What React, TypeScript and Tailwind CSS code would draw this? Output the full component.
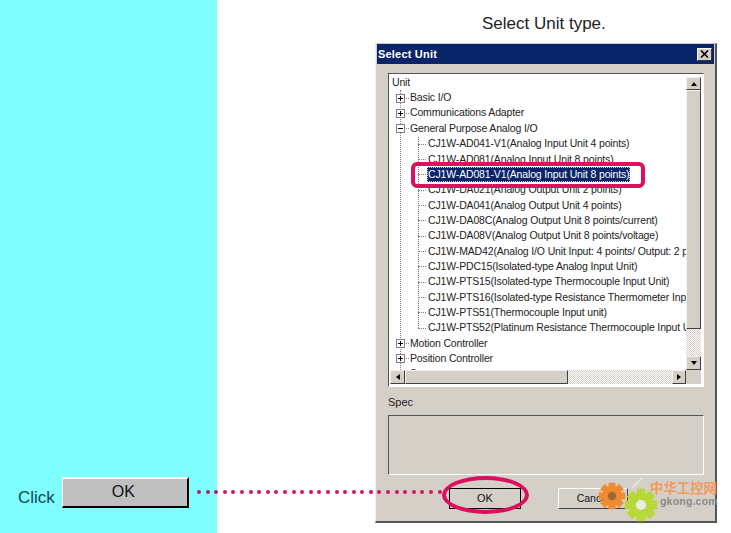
import React from 'react';

const children = [
  'CJ1W-AD041-V1(Analog Input Unit 4 points)',
  'CJ1W-AD081(Analog Input Unit 8 points)',
  'CJ1W-AD081-V1(Analog Input Unit 8 points)',
  'CJ1W-DA021(Analog Output Unit 2 points)',
  'CJ1W-DA041(Analog Output Unit 4 points)',
  'CJ1W-DA08C(Analog Output Unit 8 points/current)',
  'CJ1W-DA08V(Analog Output Unit 8 points/voltage)',
  'CJ1W-MAD42(Analog I/O Unit Input: 4 points/ Output: 2 points)',
  'CJ1W-PDC15(Isolated-type Analog Input Unit)',
  'CJ1W-PTS15(Isolated-type Thermocouple Input Unit)',
  'CJ1W-PTS16(Isolated-type Resistance Thermometer Input Unit)',
  'CJ1W-PTS51(Thermocouple Input unit)',
  'CJ1W-PTS52(Platinum Resistance Thermocouple Input Unit)',
];

const Expander = ({ open }: { open?: boolean }) => (
  <span className="relative w-[9px] h-[9px] border border-[#808080] bg-white shrink-0 ml-[7px]">
    <span className="absolute left-[1px] top-[3px] w-[5px] h-[1px] bg-black" />
    {!open && <span className="absolute left-[3px] top-[1px] w-[1px] h-[5px] bg-black" />}
  </span>
);

const TopRow = ({ label, open }: { label: string; open?: boolean }) => (
  <div className="h-[15.35px] flex items-center whitespace-nowrap">
    <Expander open={open} />
    <span className="w-[3px] border-t border-dotted border-[#808080] mr-[1px] ml-[1px]" />
    <span>{label}</span>
  </div>
);

const Arrow = ({ dir }: { dir: 'up' | 'down' | 'left' | 'right' }) => {
  const pts = {
    up: '1,6 4,2 7,6',
    down: '1,2 4,6 7,2',
    left: '6,1 2,4 6,7',
    right: '2,1 6,4 2,7',
  }[dir];
  return (
    <svg width="8" height="8" viewBox="0 0 8 8">
      <polygon points={pts} fill="#000" />
    </svg>
  );
};

const raised =
  'bg-[#d4d0c8] border-t border-l border-t-[#f4f2ec] border-l-[#f4f2ec] border-r border-b border-r-[#404040] border-b-[#404040]';
const checker =
  'bg-[repeating-conic-gradient(#d4d0c8_0%_25%,#ffffff_0%_50%)] bg-[length:2px_2px]';

const Gear = ({ size, color, hole }: { size: number; color: string; hole: string }) => {
  const teeth = [0, 45, 90, 135, 180, 225, 270, 315];
  return (
    <svg width={size} height={size} viewBox="0 0 40 40">
      {teeth.map((a) => (
        <rect key={a} x="15" y="1" width="10" height="12" rx="1" fill={color} transform={`rotate(${a} 20 20)`} />
      ))}
      <circle cx="20" cy="20" r="14" fill={color} />
      <circle cx="20" cy="20" r="6" fill={hole} />
    </svg>
  );
};

export default function App() {
  return (
    <div className="relative flex w-[731px] h-[533px] overflow-hidden bg-white font-['Liberation_Sans',Arial,sans-serif]">
      {/* Left column */}
      <div className="w-[217px] h-full bg-[#80ffff] flex items-end pl-[18px] pb-[25px] shrink-0">
        <span className="text-[17px] leading-[20px] text-[#0a4a55] mr-[7px]">Click</span>
        <div className="w-[127px] h-[31px] bg-[#c0c0c0] border-t-2 border-l border-t-white border-l-white border-r-2 border-b-2 border-r-black border-b-black flex items-center justify-center text-[16px] text-[#111] pb-[1px] pr-[3px]">
          OK
        </div>
      </div>

      {/* Right column */}
      <div className="flex-1 flex flex-col">
        <div className="h-[43px] pl-[265px] pt-[14px] text-[17px] leading-[20px] text-[#222] whitespace-nowrap">Select Unit type.</div>

        {/* Dialog */}
        <div className="ml-[158px] w-[342px] h-[480px] bg-[#d4d0c8] border-r-2 border-b-2 border-r-[#555] border-b-[#555] border-t border-l border-t-[#d4d0c8] border-l-[#eeeeee] flex flex-col">
          <div className="h-[20px] ml-[1px] mr-[1px] bg-[#0a246a] flex items-center justify-between pl-[1px] pr-[2px] shrink-0">
            <span className="text-white text-[11px] font-bold tracking-[0.2px]">Select Unit</span>
            <span className="w-[15px] h-[13px] bg-[#d4d0c8] border border-r-[#333] border-b-[#333] border-t-white border-l-white flex items-center justify-center">
              <svg width="9" height="8" viewBox="0 0 9 8"><path d="M1 0.5 L8 7.5 M8 0.5 L1 7.5" stroke="#000" strokeWidth="1.6" /></svg>
            </span>
          </div>

          {/* Tree box */}
          <div className="relative mt-[9px] ml-[12px] w-[316px] h-[314px] bg-white border border-t-[#555] border-l-[#555] border-r-white border-b-white flex flex-col shrink-0">
            <div className="flex flex-1 min-h-0">
              <div className="relative flex-1 min-w-0 overflow-hidden pt-[1px] text-[10.5px] text-[#222] tracking-[-0.15px]">
                <div className="absolute left-[11px] top-[16px] bottom-0 border-l border-dotted border-[#808080]" />
                <div className="absolute left-[29px] top-[63px] h-[191px] border-l border-dotted border-[#808080]" />
                <div className="relative h-[15.35px] pl-[3px] flex items-center">Unit</div>
                <div className="relative">
                  <TopRow label="Basic I/O" />
                  <TopRow label="Communications Adapter" />
                  <TopRow label="General Purpose Analog I/O" open />
                  {children.map((label, i) => (
                    <div key={label} className="h-[15.35px] flex items-center whitespace-nowrap pl-[29px]">
                      <span className="w-[8px] border-t border-dotted border-[#808080] mr-[1px] shrink-0" />
                      <span className={i === 2 ? 'bg-[#0a246a] text-white px-[1px] leading-[15px] outline-1 outline-dotted outline-[#ccc] -outline-offset-1' : 'px-[1px]'}>
                        {label}
                      </span>
                    </div>
                  ))}
                  <TopRow label="Motion Controller" />
                  <TopRow label="Position Controller" />
                  <div className="h-[15.35px] pl-[21px] flex items-center">S</div>
                </div>
              </div>

              {/* Vertical scrollbar */}
              <div className={`w-[15px] mt-[3px] mr-[2px] flex flex-col shrink-0 ${checker}`}>
                <div className={`h-[13px] flex items-center justify-center ${raised}`}><Arrow dir="up" /></div>
                <div className={`h-[239px] ${raised}`} />
                <div className="flex-1" />
                <div className={`h-[14px] flex items-center justify-center ${raised}`}><Arrow dir="down" /></div>
              </div>
            </div>

            {/* Horizontal scrollbar */}
            <div className={`h-[14px] ml-[1px] mr-[2px] mb-[2px] flex shrink-0 ${checker}`}>
              <div className={`w-[15px] flex items-center justify-center ${raised}`}><Arrow dir="left" /></div>
              <div className={`w-[163px] ${raised}`} />
              <div className="flex-1" />
              <div className={`w-[14px] flex items-center justify-center ${raised}`}><Arrow dir="right" /></div>
              <div className="w-[15px] bg-[#d4d0c8]" />
            </div>
          </div>

          <div className="ml-[12px] mt-[8px] text-[11px] leading-[14px] text-[#222]">Spec</div>

          <div className="mt-[6px] ml-[12px] w-[316px] h-[60px] border border-t-[#555] border-l-[#555] border-r-white border-b-white shrink-0" />

          <div className="flex mt-[13px] ml-[73px]">
            <div className="w-[72px] h-[21px] border border-black bg-[#d4d0c8] flex items-center justify-center text-[11px] text-[#111]">OK</div>
            <div className={`w-[70px] h-[21px] ml-[37px] flex items-center justify-center text-[10.5px] text-[#111] border-t-white border-l-white ${raised}`}>Cancel</div>
          </div>
        </div>
      </div>

      {/* Pink highlight round the selected row */}
      <div className="absolute left-[411px] top-[162px] w-[234px] h-[26px] border-4 border-[#dd1060] rounded-[6px]" />

      {/* Dotted leader from the OK button */}
      <div className="absolute left-[197px] top-[490px] flex gap-[4.6px]">
        {Array.from({ length: 29 }, (_, i) => (
          <span key={i} className={`w-[4px] h-[4px] rounded-full ${i < 3 ? 'bg-[#b0206a]' : 'bg-[#d81060]'}`} />
        ))}
      </div>

      {/* Ellipse round OK */}
      <div className="absolute left-[442px] top-[476px] w-[87px] h-[38px] border-4 border-[#dd1060] rounded-[50%]" />

      {/* Watermark */}
      <div className="absolute left-[598px] top-[477px] w-[133px] h-[48px]">
        <svg className="absolute left-[33px] top-0" width="12" height="12" viewBox="0 0 12 12">
          <path d="M1 11 L11 1" stroke="#e4e4e4" strokeWidth="2" />
        </svg>
        <div className="absolute left-0 top-[5px]"><Gear size={28} color="#f08a30" hole="#a06a30" /></div>
        <div className="absolute left-[26px] top-[11px]"><Gear size={34} color="#b8d838" hole="#ececec" /></div>
        <div className="absolute left-[52px] top-[2px] text-[13.4px] leading-[16px] font-bold text-[#f09a60] whitespace-nowrap font-['Noto_Sans_CJK_SC',sans-serif]">中华工控网</div>
        <div className="absolute left-[62px] top-[17px] text-[10.5px] leading-[14px] font-bold text-[#8a8a8a] whitespace-nowrap tracking-[0.2px]">gkong.com</div>
      </div>
    </div>
  );
}
